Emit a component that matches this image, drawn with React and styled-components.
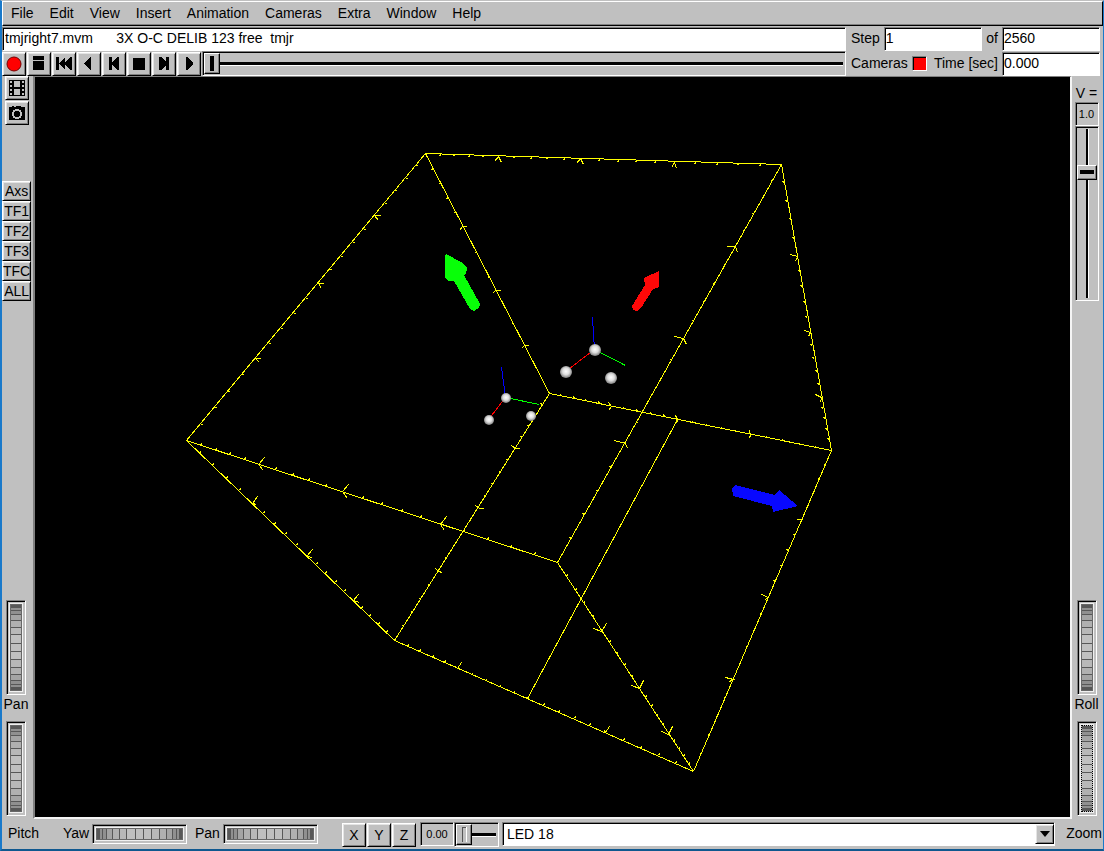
import React from "react";
import styled, { createGlobalStyle, css } from "styled-components";

const FACE = "#c0c0c0";
const SHADE = "#808080";

const GlobalStyle = createGlobalStyle`
  *, *::before, *::after { box-sizing: border-box; }
  body {
    margin: 0;
    background: ${FACE};
    color: #000;
    font: 14px/18px "Liberation Sans", Arial, sans-serif;
  }
  button, input, select { font: inherit; color: inherit; margin: 0; border-radius: 0; }
`;

const raised = css`
  background: ${FACE};
  border: 1px solid;
  border-color: #fff #000 #000 #fff;
  box-shadow: inset 1px 1px #e4e4e4, inset -1px -1px ${SHADE};
`;

const sunken = css`
  border: 1px solid;
  border-color: ${SHADE} #fff #fff ${SHADE};
  box-shadow: inset 1px 1px #000;
`;

const Shell = styled.div`
  min-height: 100vh;
  display: flex;
  flex-direction: column;
  background: ${FACE};
  border-style: solid;
  border-width: 1px 1px 1px 2px;
  border-color: ${FACE} #1979ca #1979ca #1979ca;
  border-bottom: 2px solid #10588f;
`;

const MenuBar = styled.nav`
  height: 25px;
  display: flex;
  align-items: center;
  gap: 16px;
  padding: 0 8px 2px;
  border: 1px solid;
  border-color: #fff #000 #000 #fff;
  box-shadow: inset 0 -1px ${SHADE};
`;

const MenuItem = styled.button`
  padding: 0;
  border: 0;
  background: none;
  line-height: 18px;
`;

const Header = styled.header`
  display: flex;
`;

const HeaderMain = styled.div`
  flex: 1;
  min-width: 0;
`;

const HeaderFields = styled.div`
  width: 257px;
  padding: 0 3px 0 5px;
`;

const Row = styled.div`
  height: 25px;
  display: flex;
  align-items: center;
`;

const TextBox = styled.input`
  ${sunken}
  width: ${(p) => p.$width || "100%"};
  height: 24px;
  padding: ${(p) => (p.$width ? "0 1px 2px" : "0 2px 2px")};
  background: #fff;
`;

const FieldLabel = styled.label`
  margin-left: ${(p) => (p.$push ? "auto" : "0")};
  padding: 0 4px 2px 0;
  white-space: nowrap;
`;

const Swatch = styled.button`
  ${sunken}
  width: 15px;
  height: 15px;
  padding: 0;
  background: #f00;
`;

const ButtonStrip = styled.div`
  display: flex;
  flex: none;
  gap: 1px;
  padding: 1px 1px 0 0;
  margin: ${(p) => p.$margin || "0"};
`;

const ToolButton = styled.button`
  ${raised}
  flex: none;
  width: 24px;
  height: 24px;
  padding: 0;
  display: flex;
  align-items: center;
  justify-content: center;
`;

const SideButton = styled.button`
  ${raised}
  min-width: 27px;
  height: 20px;
  padding: 0;
  line-height: 18px;
  white-space: nowrap;
`;

const hThumb = css`
  appearance: none;
  width: 16px;
  height: 21px;
  border: 1px solid;
  border-color: #fff #000 #000 #fff;
  border-radius: 0;
  box-shadow: inset -1px -1px ${SHADE};
  background: ${(p) =>
    p.$light
      ? `linear-gradient(#555, #555) 5px 2px / 1px 15px no-repeat, linear-gradient(#555, #555) 5px 2px / 4px 1px no-repeat, linear-gradient(#fff, #fff) 9px 2px / 1px 15px no-repeat, ${FACE}`
      : `linear-gradient(#000, #000) center / 4px 15px no-repeat, ${FACE}`};
`;

const Slider = styled.input`
  ${sunken}
  appearance: none;
  flex: ${(p) => (p.$width ? "none" : "1")};
  min-width: 0;
  width: ${(p) => p.$width || "auto"};
  height: 25px;
  padding: 0 1px;
  background:
    linear-gradient(#000, #000) center 10px / calc(100% - 4px) 3px no-repeat,
    linear-gradient(#fff, #fff) center 13px / calc(100% - 4px) 1px no-repeat,
    ${FACE};
  &::-webkit-slider-thumb { ${hThumb} }
`;

const VerticalSlider = styled.input`
  ${sunken}
  appearance: none;
  writing-mode: vertical-lr;
  width: 24px;
  height: 175px;
  background:
    linear-gradient(#000, #000) 10px center / 2px calc(100% - 4px) no-repeat,
    linear-gradient(#fff, #fff) 12px center / 1px calc(100% - 4px) no-repeat,
    ${FACE};
  &::-webkit-slider-thumb {
    appearance: none;
    width: 20px;
    height: 15px;
    border: 1px solid;
    border-color: #fff #000 #000 #fff;
    border-radius: 0;
    box-shadow: inset -1px -1px ${SHADE};
    background: linear-gradient(#000, #000) center / 14px 4px no-repeat, ${FACE};
  }
`;

const Readout = styled.output`
  ${sunken}
  width: ${(p) => p.$width};
  height: 24px;
  display: flex;
  align-items: center;
  justify-content: center;
  font-size: 11px;
`;

/* Shading of a ribbed wheel, as [offset, length, colour] along its axis. */
const RIBS = [
  [0, 3, "#585858"], [3, 2, "#909090"], [5, 1, "#585858"], [6, 3, "#909090"],
  [9, 1, "#585858"], [10, 5, "#a4a4a4"], [15, 1, "#585858"], [16, 6, "#b0b0b0"],
  [22, 1, "#585858"], [23, 6, "#b8b8b8"], [29, 1, "#585858"], [30, 8, FACE],
  [38, 1, "#585858"], [39, 7, FACE], [46, 1, "#585858"], [47, 7, FACE],
  [54, 1, "#585858"], [55, 7, "#b8b8b8"], [62, 1, "#585858"], [63, 6, "#b0b0b0"],
  [69, 1, "#585858"], [70, 5, "#a4a4a4"], [75, 1, "#585858"], [76, 3, "#909090"],
  [79, 1, "#585858"], [80, 2, "#909090"], [82, 3, "#585858"],
];
const ribs = (side) =>
  `linear-gradient(to ${side}, ${RIBS.map(([o, l, c]) => `${c} ${o}px ${o + l}px`).join(", ")})`;

const WheelFrame = styled.div`
  ${sunken}
  display: flex;
  flex: none;
  padding: 3px;
  width: ${(p) => (p.$vertical ? "20px" : "95px")};
  height: ${(p) => (p.$vertical ? "95px" : "20px")};
`;

const WheelInput = styled.input`
  appearance: none;
  flex: 1;
  min-width: 0;
  min-height: 0;
  width: 100%;
  height: 100%;
  writing-mode: ${(p) => (p.$vertical ? "vertical-lr" : "horizontal-tb")};
  border: 1px ${(p) => (p.$focus ? "dotted #000" : "solid #686868")};
  box-shadow: 0 0 0 1px #f0f0f0;
  background: ${(p) => ribs(p.$vertical ? "bottom" : "right")} padding-box;
  &::-webkit-slider-thumb { appearance: none; width: 1px; height: 1px; opacity: 0; }
`;

const Body = styled.main`
  flex: 1;
  display: flex;
`;

const SideBar = styled.aside`
  flex: none;
  width: 31px;
  display: flex;
  flex-direction: column;
  align-items: ${(p) => (p.$right ? "center" : "flex-start")};
  padding: ${(p) => (p.$right ? "0 2px 3px 0" : "0 3px 3px 0")};
`;

const MediaButtons = styled.div`
  display: flex;
  flex-direction: column;
  gap: 1px;
  padding-left: 3px;
`;

const ViewButtons = styled.div`
  display: flex;
  flex-direction: column;
  margin-top: 56px;
`;

const Speed = styled.div`
  display: flex;
  flex-direction: column;
  align-items: center;
  padding-top: 8px;
`;

const WheelStack = styled.div`
  width: 100%;
  margin-top: auto;
  padding-top: 12px;
  display: flex;
  flex-direction: column;
  align-items: center;
`;

const WheelLabel = styled.label`
  margin-bottom: 8px;
`;

const Viewport = styled.section`
  flex: 1;
  min-width: 0;
  min-height: 300px;
  contain: size;
  display: flex;
  background: #000;
  border-style: solid;
  border-width: 1px 2px 2px 2px;
  border-color: ${SHADE} #f4f4f4 #f4f4f4 ${SHADE};
`;

const Scene = styled.svg`
  flex: 1;
  min-width: 0;
  display: block;
`;

const Footer = styled.footer`
  height: 30px;
  display: flex;
  align-items: center;
  padding: 0 1px 0 6px;
`;

const FootLabel = styled.label`
  width: ${(p) => p.$width || "auto"};
  padding: 0 0 2px ${(p) => p.$indent || "0"};
  white-space: nowrap;
`;

const SelectWrap = styled.div`
  position: relative;
  flex: 1;
  min-width: 0;
  margin: 0 11px 0 3px;
`;

const Select = styled.select`
  ${sunken}
  appearance: none;
  display: block;
  width: 100%;
  height: 24px;
  padding: 0 24px 0 4px;
  background: #fff;
`;

const SelectArrow = styled.span`
  ${raised}
  position: absolute;
  top: 2px;
  right: 1px;
  width: 19px;
  height: 20px;
  display: flex;
  align-items: center;
  justify-content: center;
  pointer-events: none;
`;

const ICONS = {
  record: <circle cx="10" cy="10" r="7" fill="#f00" stroke="#700" />,
  eject: <path d="M4 2h11v4H4zM4 7h11v9H4z" />,
  rewind: <path d="M2 3h3v13H2zM5 9l6-6v13l-6-6zM10 9l6-6h2v13h-2l-6-6z" />,
  back: <path d="M12 3v13h-1l-6-6V9l6-6z" />,
  stepBack: <path d="M5 3h3v5l5-5h2v13h-2l-5-5v5H5z" />,
  stop: <path d="M4 4h12v12H4z" />,
  stepForward: <path d="M15 3h-3v5L7 3H5v13h2l5-5v5h3z" />,
  play: <path d="M7 3v13h1l6-6V9L8 3z" />,
  film: (
    <path
      fillRule="evenodd"
      d="M2 2h16v16H2zM7 3v6h6V3zM7 11v6h6v-6zM3 3v2h2V3zM3 7v2h2V7zM3 11v2h2v-2zM3 15v2h2v-2zM15 3v2h2V3zM15 7v2h2V7zM15 11v2h2v-2zM15 15v2h2v-2z"
    />
  ),
  camera: (
    <>
      <path d="M2 4h3V3h2v1h1l1-1h4l1 1h4v13H2z" />
      <circle cx="10" cy="11" r="4" fill="#000" stroke={FACE} strokeWidth="2" />
    </>
  ),
};

const Icon = ({ name }) => (
  <svg
    width="20"
    height="20"
    viewBox="0 0 20 20"
    aria-hidden="true"
    shapeRendering={name === "record" ? "auto" : "crispEdges"}
  >
    {ICONS[name]}
  </svg>
);

function Wheel({ id, vertical, focus }) {
  return (
    <WheelFrame $vertical={vertical}>
      <WheelInput id={id} type="range" $vertical={vertical} $focus={focus} />
    </WheelFrame>
  );
}

/* Calibration cube: an edge runs through three arrow marks, each [x, y, barb, barb]. */
const EDGES = [
  { from: [426, 154], to: [782, 165], marks: [[499, 157, [-4, 5], [3, 6]], [581, 159, [-4, 5], [3, 6]], [675, 163, [-3, 5], [2, 6]]] },
  { from: [426, 154], to: [550, 394], marks: [[463, 227, [-3, 4], [4, 0]], [496, 291, [-3, 3], [5, 0]], [525, 346, [-3, 3], [4, 0]]] },
  { from: [426, 154], to: [187, 441], marks: [[375, 216, [6, 0], [4, 5]], [319, 284, [5, 0], [3, 5]], [256, 359, [5, 0], [4, 4]]] },
  { from: [187, 441], to: [558, 563], marks: [[259, 465, [6, -7], [5, 6]], [343, 492, [6, -7], [5, 7]], [441, 525, [6, -8], [4, 6]]] },
  { from: [187, 441], to: [395, 641], marks: [[253, 504, [5, -7], [4, 1]], [308, 556, [5, -6], [5, 3]], [354, 601, [5, -6], [6, 2]]] },
  { from: [550, 394], to: [395, 641], marks: [[516, 449, [-4, -3], [4, 0]], [480, 509, [-4, -3], [4, 0]], [439, 572, [-3, -3], [4, 1]]] },
  { from: [550, 394], to: [832, 451], marks: [[612, 407, [-3, -4], [-3, 4]], [678, 420, [-2, -4], [-1, 4]], [751, 435, [-1, -4], [-1, 4]]] },
  { from: [782, 165], to: [832, 451], marks: [[798, 257, [-7, -2], [-2, 5]], [811, 333, [-6, -2], [-2, 4]], [822, 398, [-6, -3], [-1, 5]]] },
  { from: [558, 563], to: [782, 165], marks: [[626, 444, [-11, -3], [2, 5]], [684, 339, [-9, -2], [3, 6]], [736, 247, [-9, 0], [2, 6]]] },
  { from: [558, 563], to: [694, 772], marks: [[602, 632, [5, -8], [-8, -3]], [640, 689, [4, -8], [-8, -3]], [669, 735, [4, -8], [-7, -3]]] },
  { from: [832, 451], to: [694, 772], marks: [[803, 520, [-6, 0], [-2, 3]], [769, 598, [-7, -3], [-3, 2]], [734, 680, [-8, -2], [-4, 2]]] },
  { from: [395, 641], to: [694, 772], marks: [[458, 669, [4, -6], [-2, -2]], [528, 699, [2, -1], [-1, -1]], [606, 733, [4, -6], [-1, -2]]] },
];

function edgePath({ from, to, marks }) {
  let d = `M${from} L${to}`;
  const stops = [from, ...marks, to];
  marks.forEach(([x, y, a, b]) => {
    d += `M${x + a[0]} ${y + a[1]}L${x} ${y}L${x + b[0]} ${y + b[1]}`;
  });
  for (let s = 0; s < 4; s += 1) {
    const barb = marks[Math.min(s, 2)][2];
    const len = Math.hypot(barb[0], barb[1]);
    for (let i = 1; i < 5; i += 1) {
      const x = Math.round(stops[s][0] + ((stops[s + 1][0] - stops[s][0]) * i) / 5);
      const y = Math.round(stops[s][1] + ((stops[s + 1][1] - stops[s][1]) * i) / 5);
      d += `M${x} ${y}l${Math.round((barb[0] * 2) / len)} ${Math.round((barb[1] * 2) / len)}`;
    }
  }
  return d;
}

const TRIADS = [
  { origin: [595, 350], blue: [593, 318], green: [626, 366], red: [566, 372], free: [611, 378], r: 6 },
  { origin: [506, 398], blue: [502, 368], green: [540, 405], red: [489, 420], free: [531, 416], r: 5 },
];

function MotionScene() {
  return (
    <Scene viewBox="35 77 1035 740" role="img" aria-label="Motion scene">
      <defs>
        <radialGradient id="ball" cx="50%" cy="45%" r="55%">
          <stop offset="0" stopColor="#ffffff" />
          <stop offset="0.5" stopColor="#dedede" />
          <stop offset="1" stopColor="#7c7c7c" />
        </radialGradient>
      </defs>
      <g transform="translate(-0.5 -0.5)" fill="none" stroke="#ffff00" shapeRendering="crispEdges">
        {EDGES.map((edge) => (
          <path key={`${edge.from}-${edge.to}`} d={edgePath(edge)} />
        ))}
        <path d="M678 420L528 699" />
      </g>
      <g shapeRendering="crispEdges">
        <path fill="#08ff08" d="M446 254L463 263L467 268L466 274L464 275L480 304L479 308L474 311L470 309L454 281L449 281L445 278V256z" />
        <path fill="#ff0808" d="M659 271V287L653 289L641 308L637 311L633 310L632 306L645 285L644 278z" />
        <path fill="#0808ff" d="M732 488L735 485L775 495L779 490L798 506L773 512L772 506L733 496z" />
      </g>
      {TRIADS.map(({ origin, blue, green, red, free, r }) => (
        <g key={origin.join()}>
          <g transform="translate(-0.5 -0.5)" fill="none" shapeRendering="crispEdges">
            <path stroke="#00f" d={`M${origin}L${blue}`} />
            <path stroke="#0f0" d={`M${origin}L${green}`} />
            <path stroke="#f00" d={`M${origin}L${red}`} />
          </g>
          {[origin, red, free].map(([x, y]) => (
            <circle key={x} cx={x} cy={y} r={r} fill="url(#ball)" />
          ))}
        </g>
      ))}
    </Scene>
  );
}

const MENUS = ["File", "Edit", "View", "Insert", "Animation", "Cameras", "Extra", "Window", "Help"];
const TRANSPORT = [
  ["record", "Record"], ["eject", "Sequence"], ["rewind", "Rewind"], ["back", "Play backward"],
  ["stepBack", "Step back"], ["stop", "Stop"], ["stepForward", "Step forward"], ["play", "Play"],
];
const VIEWS = ["Axs", "TF1", "TF2", "TF3", "TFC", "ALL"];

export default function App() {
  return (
    <>
      <GlobalStyle />
      <Shell>
        <MenuBar>
          {MENUS.map((m) => <MenuItem key={m}>{m}</MenuItem>)}
        </MenuBar>
        <Header>
          <HeaderMain>
            <Row>
              <TextBox aria-label="Title" defaultValue="tmjright7.mvm      3X O-C DELIB 123 free  tmjr" />
            </Row>
            <Row>
              <ButtonStrip>
                {TRANSPORT.map(([icon, label]) => (
                  <ToolButton key={icon} aria-label={label}><Icon name={icon} /></ToolButton>
                ))}
              </ButtonStrip>
              <Slider type="range" aria-label="Position" min="0" max="2560" defaultValue="0" />
            </Row>
          </HeaderMain>
          <HeaderFields>
            <Row>
              <FieldLabel htmlFor="step">Step</FieldLabel>
              <TextBox id="step" $width="98px" defaultValue="1" />
              <FieldLabel htmlFor="total" $push>of</FieldLabel>
              <TextBox id="total" $width="98px" defaultValue="2560" />
            </Row>
            <Row>
              <FieldLabel htmlFor="cams">Cameras</FieldLabel>
              <Swatch id="cams" />
              <FieldLabel htmlFor="time" $push>Time [sec]</FieldLabel>
              <TextBox id="time" $width="98px" defaultValue="0.000" />
            </Row>
          </HeaderFields>
        </Header>
        <Body>
          <SideBar>
            <MediaButtons>
              <ToolButton aria-label="Movie"><Icon name="film" /></ToolButton>
              <ToolButton aria-label="Snapshot"><Icon name="camera" /></ToolButton>
            </MediaButtons>
            <ViewButtons>
              {VIEWS.map((v) => <SideButton key={v}>{v}</SideButton>)}
            </ViewButtons>
            <WheelStack>
              <Wheel id="pan-v" vertical />
              <WheelLabel htmlFor="pan-v">Pan</WheelLabel>
              <Wheel id="pitch" vertical />
            </WheelStack>
          </SideBar>
          <Viewport><MotionScene /></Viewport>
          <SideBar $right>
            <Speed>
              <label htmlFor="speed">V =</label>
              <Readout $width="24px">1.0</Readout>
              <VerticalSlider id="speed" type="range" defaultValue="24" />
            </Speed>
            <WheelStack>
              <Wheel id="roll" vertical />
              <WheelLabel htmlFor="roll">Roll</WheelLabel>
              <Wheel id="zoom" vertical focus />
            </WheelStack>
          </SideBar>
        </Body>
        <Footer>
          <FootLabel htmlFor="pitch" $width="55px">Pitch</FootLabel>
          <FootLabel htmlFor="yaw" $width="29px">Yaw</FootLabel>
          <Wheel id="yaw" />
          <FootLabel htmlFor="pan-h" $width="36px" $indent="8px">Pan</FootLabel>
          <Wheel id="pan-h" />
          <ButtonStrip $margin="0 3px 0 24px">
            {["X", "Y", "Z"].map((a) => <ToolButton key={a}>{a}</ToolButton>)}
          </ButtonStrip>
          <Readout $width="34px">0.00</Readout>
          <Slider $light $width="45px" type="range" aria-label="Offset" defaultValue="0" />
          <SelectWrap>
            <Select aria-label="Marker" defaultValue="LED 18">
              <option>LED 18</option>
            </Select>
            <SelectArrow>
              <svg width="10" height="6" viewBox="0 0 10 6" aria-hidden="true"><path d="M0 0h10L5 6z" /></svg>
            </SelectArrow>
          </SelectWrap>
          <FootLabel htmlFor="zoom">Zoom</FootLabel>
        </Footer>
      </Shell>
    </>
  );
}
